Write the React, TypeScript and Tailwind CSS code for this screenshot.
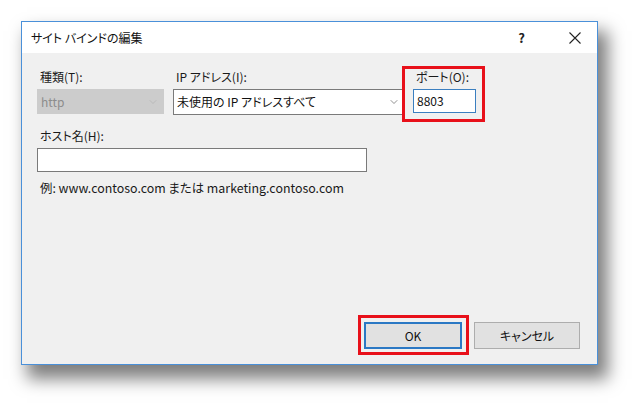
import { ChevronDown } from "lucide-react"

const font = "[font-family:'Noto_Sans_CJK_JP','Noto_Sans',sans-serif] [font-feature-settings:'palt']"

function Label({ children }: { children: React.ReactNode }) {
  return <div className="h-4 leading-4 text-[12px] text-[#1a1a1a] pl-[3px] mb-1">{children}</div>
}

export default function App() {
  return (
    <div className={`w-[639px] h-[407px] bg-white pt-[21px] pl-[21px] ${font}`}>
      <div className="relative w-[577px] h-[344px] border border-[#4a90d9] bg-[#f0f0f0] flex flex-col shadow-[8px_12px_16px_2px_rgba(0,0,0,0.5)]">
        {/* title bar */}
        <div className="h-[31px] bg-white flex items-center pl-[9px] pr-[16px] shrink-0">
          <span className="text-[12px] text-[#111]">サイト バインドの編集</span>
          <span className="ml-auto mr-[44px] text-[13px] font-bold text-[#222]">?</span>
          <svg width="12" height="12" viewBox="0 0 12 12" className="text-[#222]">
            <path d="M0.5 0.5 L11.5 11.5 M11.5 0.5 L0.5 11.5" stroke="currentColor" strokeWidth="1.1" />
          </svg>
        </div>

        {/* body */}
        <div className="flex-1 flex flex-col pl-[15px] pt-[16px] pb-[15px]">
          <div className="flex gap-[9px]">
            <div className="w-[127px]">
              <Label>種類(T):</Label>
              <div className="h-[25px] bg-[#cccccc] border border-[#cccccc] flex items-center pl-[3px] pr-[4px] text-[12px] text-[#8c8c8c]">
                <span>http</span>
                <ChevronDown className="ml-auto w-[12px] h-[12px] text-[#b0b0b0]" strokeWidth={1.3} />
              </div>
            </div>
            <div className="w-[231px]">
              <Label>IP アドレス(I):</Label>
              <div className="h-[26px] bg-white border border-[#7a7a7a] flex items-center pl-[3px] pr-[3px] text-[12px] text-[#111]">
                <span>未使用の IP アドレスすべて</span>
                <ChevronDown className="ml-auto w-[12px] h-[12px] text-[#555]" strokeWidth={1.3} />
              </div>
            </div>
            <div className="w-[63px] relative">
              <Label>ポート(O):</Label>
              <div className="h-[24px] mt-px bg-white border border-[#3b7fc0] flex items-center pl-[3px] text-[12px] text-[#111]">
                8803
              </div>
              <div className="absolute left-[-11px] top-[-3px] w-[83px] h-[56px] border-[3px] border-[#e8101a]" />
            </div>
          </div>

          <div className="mt-[13px]">
            <Label>ホスト名(H):</Label>
            <div className="w-[330px] h-[24px] bg-white border border-[#7a7a7a]" />
          </div>

          <div className="mt-[8px] h-4 leading-4 pl-[3px] text-[12.4px] text-[#1a1a1a]">
            例: www.contoso.com または marketing.contoso.com
          </div>

          <div className="mt-auto flex justify-end gap-[12px] pr-[17px]">
            <div className="relative">
              <div className="w-[98px] h-[27px] bg-[#e1e1e1] border-2 border-[#2b78c4] flex items-center justify-center text-[12px] text-[#111]">
                OK
              </div>
              <div className="absolute left-[-6px] top-[-7px] w-[111px] h-[40px] border-[3px] border-[#e8101a]" />
            </div>
            <div className="w-[106px] h-[27px] bg-[#e1e1e1] border border-[#adadad] flex items-center justify-center text-[12px] text-[#111]">
              キャンセル
            </div>
          </div>
        </div>
      </div>
    </div>
  )
}
